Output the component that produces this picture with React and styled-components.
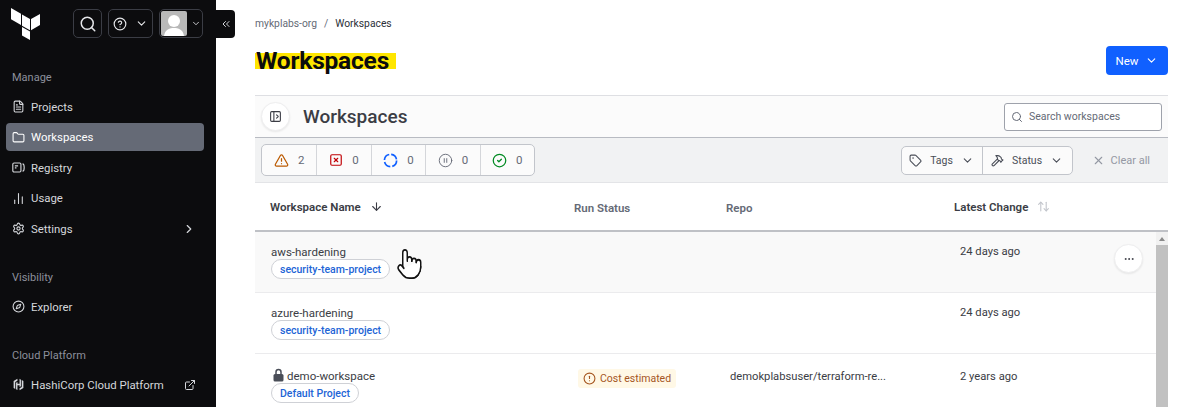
import React from "react";
import styled, { createGlobalStyle } from "styled-components";
import {
  ArrowDown,
  ArrowUpDown,
  BarChart2,
  ChevronDown,
  ChevronRight,
  ChevronsLeft,
  CircleAlert,
  CircleCheck,
  CircleHelp,
  CirclePause,
  Compass,
  ExternalLink,
  FileText,
  Folder,
  Hammer,
  MoreHorizontal,
  PanelLeftOpen,
  Pointer,
  Search,
  Settings,
  SquareX,
  Tag,
  TriangleAlert,
  X,
} from "lucide-react";

const GlobalStyle = createGlobalStyle`
  html, body {
    margin: 0;
    height: 100%;
    overflow: hidden;
    background: white;
    font-family: Roboto, "Open Sans", sans-serif;
  }
  * { box-sizing: border-box; }
`;

const Page = styled.div`
  display: flex;
  width: 1177px;
  height: 407px;
  overflow: hidden;
`;

const Sidebar = styled.aside`
  position: relative;
  flex: 0 0 216px;
  min-width: 0;
  background: #0c0c0e;
  padding: 9px 12px 0 6px;
  display: flex;
  flex-direction: column;
`;

const TopBar = styled.div`
  display: flex;
  align-items: center;
  gap: 6px;
  height: 29px;
  margin-bottom: 31.6px;
`;

const Logo = styled.svg`
  width: 30px;
  height: 32px;
  margin: 0 26px 0 5px;
  flex: none;
`;

const TopButton = styled.div`
  width: ${(props) => props.width}px;
  height: 29px;
  border: 1px solid #3b3d45;
  border-radius: 5px;
  display: flex;
  align-items: center;
  justify-content: ${(props) => (props.avatar ? "flex-start" : "center")};
  gap: ${(props) => (props.avatar ? "4px" : "8px")};
  color: #e6e7ea;
  padding: ${(props) => (props.avatar ? "1px" : "0")};
`;

const Avatar = styled.svg`
  width: 26px;
  height: 25px;
  flex: none;
`;

const CollapseTab = styled.div`
  position: absolute;
  left: 216px;
  top: 10px;
  width: 19px;
  height: 28px;
  background: #0c0c0e;
  border-radius: 0 4px 4px 0;
  color: #d5d7db;
  display: flex;
  align-items: center;
  justify-content: center;
`;

const NavHeading = styled.div`
  font-size: 11px;
  line-height: 16px;
  color: #8c909c;
  padding-left: 6px;
  margin: ${(props) => props.top ?? 0}px 0 7px;
`;

const NavItem = styled.div`
  display: flex;
  align-items: center;
  height: 28px;
  margin-bottom: 2.5px;
  padding: 0 8px 0 6px;
  gap: 6px;
  border-radius: 4px;
  font-size: 11.4px;
  color: ${(props) => (props.active ? "#ffffff" : "#d5d7db")};
  background: ${(props) => (props.active ? "#656a76" : "transparent")};
`;

const NavEnd = styled.span`
  margin-left: auto;
  display: flex;
  color: #d5d7db;
`;

const Main = styled.main`
  flex: 1;
  min-width: 0;
  padding: 0 9px 0 39px;
  display: flex;
  flex-direction: column;
`;

const Breadcrumb = styled.div`
  display: flex;
  gap: 7px;
  align-items: center;
  height: 16px;
  margin-top: 15px;
  font-size: 10.3px;
  color: #656a76;
`;

const Current = styled.span`
  color: #2b2f38;
`;

const TitleRow = styled.div`
  display: flex;
  align-items: center;
  justify-content: space-between;
  height: 29px;
  margin: 15px 0 20px;
`;

const PageTitle = styled.h1`
  margin: 0;
  padding: 0 7px 0 1px;
  font-size: 24.5px;
  line-height: 30px;
  font-weight: 700;
  letter-spacing: -0.2px;
  color: #0c0c0e;
  background: linear-gradient(#ffe600, #ffe600) no-repeat 0 7px / 100% 16px;
`;

const NewButton = styled.button`
  width: 62px;
  height: 29px;
  border: 0;
  border-radius: 4px;
  background: #1060ff;
  color: white;
  font: 400 11.5px Roboto, sans-serif;
  display: flex;
  align-items: center;
  justify-content: center;
  gap: 7px;
`;

const PanelHeader = styled.div`
  display: flex;
  align-items: center;
  height: 43px;
  padding: 0 6px;
  background: #fbfbfb;
  border-top: 1px solid #dedfe3;
  border-bottom: 1px solid #b8bbc2;
`;

const RoundButton = styled.div`
  width: 29px;
  height: 29px;
  flex: none;
  border-radius: 50%;
  background: white;
  border: 1px solid #eeeeef;
  box-shadow: 0 1px 2px rgba(0, 0, 0, 0.08);
  display: flex;
  align-items: center;
  justify-content: center;
  color: #3b3d45;
`;

const PanelTitle = styled.h2`
  margin: 0 0 0 13px;
  font-size: 19px;
  font-weight: 500;
  color: #3b3d45;
`;

const SearchBox = styled.div`
  margin-left: auto;
  width: 158px;
  height: 28px;
  border: 1px solid #9ea2ab;
  border-radius: 3px;
  background: white;
  display: flex;
  align-items: center;
  gap: 6px;
  padding: 0 6px;
  font-size: 10.5px;
  color: #656a76;
`;

const FilterBar = styled.div`
  display: flex;
  align-items: center;
  height: 45px;
  padding: 0 18px 0 6px;
  background: #f1f2f3;
  border-bottom: 1px solid #e3e4e7;
`;

const FilterGroup = styled.div`
  display: flex;
  height: ${(props) => props.height}px;
  border: 1px solid #c2c5cb;
  border-radius: 5px;
  background: #fbfbfb;
  margin-left: ${(props) => props.left ?? 0};
`;

const StatusCell = styled.div`
  width: 54.4px;
  display: flex;
  align-items: center;
  justify-content: center;
  gap: 9px;
  font-size: 11.5px;
  color: #656a76;
  border-left: ${(props) => (props.first ? "0" : "1px solid #d4d6da")};
`;

const SelectCell = styled.div`
  width: ${(props) => props.width}px;
  display: flex;
  align-items: center;
  justify-content: center;
  gap: 8px;
  font-size: 10.5px;
  color: #4a4e58;
  border-left: ${(props) => (props.first ? "0" : "1px solid #c2c5cb")};
`;

const ClearAll = styled.div`
  display: flex;
  align-items: center;
  gap: 6px;
  margin-left: 19px;
  font-size: 11px;
  color: #9498a3;
`;

const TableHead = styled.div`
  display: grid;
  grid-template-columns: 304px 152px 228px 1fr;
  align-items: center;
  height: 49px;
  padding: 0 0 2px 15px;
  border-bottom: 2px solid #bfc1c6;
`;

const HeadCell = styled.div`
  display: flex;
  align-items: center;
  gap: 9px;
  font-size: 11.5px;
  font-weight: 600;
  color: ${(props) => (props.muted ? "#656a76" : "#3b3d45")};
  transform: translateY(${(props) => (props.muted ? "2px" : "1px")});
`;

const TableBody = styled.div`
  position: relative;
  display: flex;
  flex: 1;
  min-height: 0;
  overflow: hidden;
`;

const Rows = styled.div`
  flex: 1;
  min-width: 0;
`;

const Row = styled.div`
  position: relative;
  display: grid;
  grid-template-columns: 307px 152px 230px 1fr;
  height: ${(props) => props.height}px;
  padding-left: 16px;
  background: ${(props) => (props.hover ? "#f9f9f9" : "white")};
  border-bottom: 1px solid #ebebed;
`;

const NameCell = styled.div`
  padding-top: ${(props) => props.top}px;
  display: flex;
  flex-direction: column;
  align-items: flex-start;
`;

const Name = styled.div`
  display: flex;
  align-items: center;
  gap: 2px;
  font-size: 11.5px;
  line-height: 14px;
  color: #3b3d45;
`;

const Pill = styled.span`
  display: inline-flex;
  align-items: center;
  height: 20px;
  padding: 0 8px;
  border: 1px solid #cfd1d6;
  border-radius: 10px;
  background: white;
  font-size: 10.5px;
  font-weight: 500;
  color: #2264d6;
`;

const Cell = styled.div`
  padding-top: ${(props) => props.top}px;
  font-size: 11.2px;
  line-height: 15px;
  color: #3b3d45;
  white-space: nowrap;
`;

const CostBadge = styled.span`
  display: inline-flex;
  align-items: center;
  gap: 4px;
  height: 19px;
  padding: 0 5px;
  border-radius: 3px;
  background: #fff8e6;
  font-size: 10.5px;
  color: #a5551f;
`;

const RowAction = styled(RoundButton)`
  position: absolute;
  right: 13px;
  top: 12px;
`;

const HandCursor = styled(Pointer)`
  position: absolute;
  left: 141px;
  top: 15px;
`;

const LockIcon = styled.svg`
  width: 13px;
  height: 14px;
  margin: -2px 0 0 1px;
  flex: none;
`;

const Scrollbar = styled.div`
  flex: 0 0 12px;
  background: #f1f1f1;
  display: flex;
  flex-direction: column;
  align-items: center;
`;

const ScrollArrow = styled.div`
  flex: 0 0 13px;
  padding-top: 5px;
  &::before {
    content: "";
    display: block;
    border: 3px solid transparent;
    border-top: 0;
    border-bottom: 4px solid #8a8a8a;
  }
`;

const ScrollThumb = styled.div`
  flex: 1;
  width: 100%;
  background: #c1c1c1;
`;

const RegistryIcon = () => (
  <svg width="13" height="13" viewBox="0 0 16 16" fill="none" stroke="currentColor" strokeWidth="1.4">
    <rect x="1" y="2.5" width="10" height="11" rx="1.5" />
    <path d="M3.5 6h4M3.5 8.5h2M13 3.5c1.3 0 2 1 2 4.5s-.7 4.5-2 4.5" />
  </svg>
);

const HashiIcon = () => (
  <svg width="13" height="13" viewBox="0 0 16 16" fill="currentColor">
    <path d="M6.7 1 2 3.7v8.6l2 1.2V5l2.700-1.600zM9.300 1v6H6.700V4.800L5 5.800v8l1.700 1V9h2.600v2.200l1.700-1V2zM12 2.600v8.400l-2.700 1.600V15L14 12.300V3.700z" />
  </svg>
);

const SpinnerIcon = () => (
  <svg width="15" height="15" viewBox="0 0 16 16" fill="none" stroke="#1060ff" strokeWidth="1.800">
    <circle cx="8" cy="8" r="6.500" strokeDasharray="8 2.200" />
  </svg>
);

const TerraformLogo = () => (
  <Logo viewBox="0 0 30 32" fill="white">
    <path d="M0 0l10 5.700v11.300L0 11.300zM11 6.500l8 4.500v11.300l-8-4.500zM20 11l9-5v11l-9 5.300zM11 19l8 4.500V32l-8-4.500z" />
  </Logo>
);

const UserAvatar = () => (
  <Avatar viewBox="0 0 26 25">
    <rect width="26" height="25" rx="2" fill="#b9b9b9" />
    <circle cx="13" cy="10" r="6" fill="white" />
    <path d="M3 25c1-7 6-8 10-8s9 1 10 8z" fill="white" />
  </Avatar>
);

const navManage = [
  { label: "Projects", icon: <FileText size={13} /> },
  { label: "Workspaces", icon: <Folder size={13} />, active: true },
  { label: "Registry", icon: <RegistryIcon /> },
  { label: "Usage", icon: <BarChart2 size={13} /> },
  { label: "Settings", icon: <Settings size={13} />, end: <ChevronRight size={14} /> },
];

const statuses = [
  { icon: <TriangleAlert size={15} color="#bb5a00" />, count: 2 },
  { icon: <SquareX size={14} color="#c00005" />, count: 0 },
  { icon: <SpinnerIcon />, count: 0 },
  { icon: <CirclePause size={15} color="#656a76" strokeWidth={1.5} />, count: 0 },
  { icon: <CircleCheck size={15} color="#008a22" />, count: 0 },
];

const App = () => {
  return (
    <Page>
      <GlobalStyle />
      <Sidebar>
        <TopBar>
          <TerraformLogo />
          <TopButton width={29}>
            <Search size={18} />
          </TopButton>
          <TopButton width={45}>
            <CircleHelp size={14} />
            <ChevronDown size={13} />
          </TopButton>
          <TopButton width={44} avatar>
            <UserAvatar />
            <ChevronDown size={13} />
          </TopButton>
        </TopBar>
        <NavHeading>Manage</NavHeading>
        {navManage.map((item) => (
          <NavItem key={item.label} active={item.active}>
            {item.icon}
            {item.label}
            {item.end && <NavEnd>{item.end}</NavEnd>}
          </NavItem>
        ))}
        <NavHeading top={24.5}>Visibility</NavHeading>
        <NavItem>
          <Compass size={13} />
          Explorer
        </NavItem>
        <NavHeading top={24.5}>Cloud Platform</NavHeading>
        <NavItem>
          <HashiIcon />
          HashiCorp Cloud Platform
          <NavEnd>
            <ExternalLink size={12} />
          </NavEnd>
        </NavItem>
        <CollapseTab>
          <ChevronsLeft size={12} />
        </CollapseTab>
      </Sidebar>
      <Main>
        <Breadcrumb>
          <span>mykplabs-org</span>
          <span>/</span>
          <Current>Workspaces</Current>
        </Breadcrumb>
        <TitleRow>
          <PageTitle>Workspaces</PageTitle>
          <NewButton>
            New
            <ChevronDown size={13} />
          </NewButton>
        </TitleRow>
        <PanelHeader>
          <RoundButton>
            <PanelLeftOpen size={13} />
          </RoundButton>
          <PanelTitle>Workspaces</PanelTitle>
          <SearchBox>
            <Search size={12} />
            Search workspaces
          </SearchBox>
        </PanelHeader>
        <FilterBar>
          <FilterGroup height={32}>
            {statuses.map((status, i) => (
              <StatusCell key={i} first={i === 0}>
                {status.icon}
                {status.count}
              </StatusCell>
            ))}
          </FilterGroup>
          <FilterGroup height={29} left="auto">
            <SelectCell width={80} first>
              <Tag size={13} />
              Tags
              <ChevronDown size={13} />
            </SelectCell>
            <SelectCell width={90}>
              <Hammer size={13} />
              Status
              <ChevronDown size={13} />
            </SelectCell>
          </FilterGroup>
          <ClearAll>
            <X size={13} />
            Clear all
          </ClearAll>
        </FilterBar>
        <TableHead>
          <HeadCell>
            Workspace Name
            <ArrowDown size={13} />
          </HeadCell>
          <HeadCell muted>Run Status</HeadCell>
          <HeadCell muted>Repo</HeadCell>
          <HeadCell>
            Latest Change
            <ArrowUpDown size={13} color="#c2c5cb" />
          </HeadCell>
        </TableHead>
        <TableBody>
          <Rows>
            <Row height={61} hover>
              <NameCell top={13}>
                <Name>aws-hardening</Name>
                <Pill>security-team-project</Pill>
              </NameCell>
              <Cell />
              <Cell />
              <Cell top={12}>24 days ago</Cell>
              <RowAction>
                <MoreHorizontal size={12} />
              </RowAction>
              <HandCursor
                width={27}
                height={34}
                preserveAspectRatio="none"
                fill="white"
                color="#111"
                strokeWidth={1.3}
              />
            </Row>
            <Row height={61}>
              <NameCell top={13}>
                <Name>azure-hardening</Name>
                <Pill>security-team-project</Pill>
              </NameCell>
              <Cell />
              <Cell />
              <Cell top={12}>24 days ago</Cell>
            </Row>
            <Row height={61}>
              <NameCell top={15}>
                <Name>
                  <LockIcon viewBox="0 0 13 14">
                    <path d="M4 6V4a2.500 2.500 0 0 1 5 0v2" fill="none" stroke="#4a4e58" strokeWidth="1.500" />
                    <rect x="1.500" y="6" width="10" height="7.500" rx="1.500" fill="#4a4e58" />
                  </LockIcon>
                  demo-workspace
                </Name>
                <Pill>Default Project</Pill>
              </NameCell>
              <Cell top={15}>
                <CostBadge>
                  <CircleAlert size={13} />
                  Cost estimated
                </CostBadge>
              </Cell>
              <Cell top={15}>demokplabsuser/terraform-re...</Cell>
              <Cell top={15}>2 years ago</Cell>
            </Row>
          </Rows>
          <Scrollbar>
            <ScrollArrow />
            <ScrollThumb />
          </Scrollbar>
        </TableBody>
      </Main>
    </Page>
  );
};

export default App;
